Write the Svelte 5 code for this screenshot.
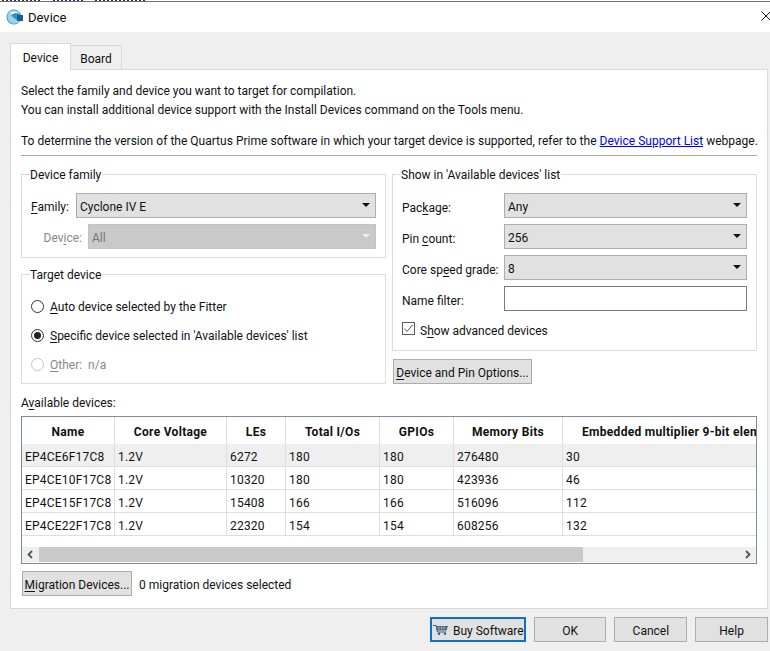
<script>
  const columns = [
    { name: 'Name', width: 93 },
    { name: 'Core Voltage', width: 112 },
    { name: 'LEs', width: 59 },
    { name: 'Total I/Os', width: 94 },
    { name: 'GPIOs', width: 74 },
    { name: 'Memory Bits', width: 109 },
    { name: 'Embedded multiplier 9-bit elements', width: 240 }
  ];
  const rows = [
    ['EP4CE6F17C8', '1.2V', '6272', '180', '180', '276480', '30'],
    ['EP4CE10F17C8', '1.2V', '10320', '180', '180', '423936', '46'],
    ['EP4CE15F17C8', '1.2V', '15408', '166', '166', '516096', '112'],
    ['EP4CE22F17C8', '1.2V', '22320', '154', '154', '608256', '132']
  ];
</script>

<div class="window">
  <div class="behind"><i class="b1"></i><i class="b2"></i><i class="b3"></i></div>
  <header class="titlebar">
    <svg class="logo" width="17" height="16" viewBox="0 0 17 16" aria-hidden="true">
      <circle cx="8" cy="8" r="7.500" fill="#2f8fc4" />
      <path d="M2 4.500C4 1.500 9 .5 12 2L15 5.500C11 3.500 7 4 5 6C7.500 9.500 11 11.500 14.500 11.500C12 15 7 16 3.500 13C1 10.500 1 7.500 2 4.500Z" fill="#9fd0ea" />
      <path d="M4.500 3C7 2.300 10 2.500 12 4C9 3.800 7 4.500 5.500 5.800Z" fill="#f4fafd" />
      <rect x="11" y="6" width="6" height="6" fill="#135f96" />
    </svg>
    <span class="title">Device</span>
    <svg class="close" width="10" height="10" viewBox="0 0 10 10" aria-hidden="true"><path d="M.5.500 9.500 9.500M9.500.500.500 9.500" stroke="#1a1a1a" fill="none" /></svg>
  </header>

  <main class="body">
    <div class="tabs">
      <div class="tab active">Device</div>
      <div class="tab">Board</div>
    </div>
    <section class="pane">
      <div class="intro">
        <p>Select the family and device you want to target for compilation.</p>
        <p>You can install additional device support with the Install Devices command on the Tools menu.</p>
        <p class="spaced">To determine the version of the Quartus Prime software in which your target device is supported, refer to the <a href="#top">Device Support List</a> webpage.</p>
      </div>

      <div class="columns">
        <div class="col">
          <fieldset class="family">
            <legend>Device family</legend>
            <div class="field">
              <span class="lab"><u>F</u>amily:</span>
              <div class="select wide"><span>Cyclone IV E</span><i class="arrow"></i></div>
            </div>
            <div class="field second">
              <span class="lab dim">Dev<u>i</u>ce:</span>
              <div class="select disabled"><span>All</span><i class="arrow"></i></div>
            </div>
          </fieldset>
          <fieldset class="target">
            <legend>Target device</legend>
            <div class="radio"><i class="dot"></i><span><u>A</u>uto device selected by the Fitter</span></div>
            <div class="radio"><i class="dot on"></i><span><u>S</u>pecific device selected in 'Available devices' list</span></div>
            <div class="radio dim"><i class="dot off"></i><span><u>O</u>ther: &nbsp;n/a</span></div>
          </fieldset>
        </div>

        <div class="col">
          <fieldset class="show">
            <legend>Show in 'Available devices' list</legend>
            <div class="grid">
              <span>Pac<u>k</u>age:</span>
              <div class="select"><span>Any</span><i class="arrow"></i></div>
              <span>Pin <u>c</u>ount:</span>
              <div class="select"><span>256</span><i class="arrow"></i></div>
              <span>Core sp<u>e</u>ed grade:</span>
              <div class="select"><span>8</span><i class="arrow"></i></div>
              <span>Name filter:</span>
              <div class="input"></div>
            </div>
            <div class="check">
              <svg width="13" height="13" viewBox="0 0 13 13" aria-hidden="true">
                <rect x=".5" y=".5" width="12" height="12" fill="#fff" stroke="#5a5a5a" />
                <path d="M2.500 6.500 5 9.500 10.500 3" fill="none" stroke="#555" />
              </svg>
              <span>S<u>h</u>ow advanced devices</span>
            </div>
          </fieldset>
          <div class="btn options"><u>D</u>evice and Pin Options...</div>
        </div>
      </div>

      <div class="avail">A<u>v</u>ailable devices:</div>
      <div class="table">
        <div class="viewport">
          <div class="row head">
            {#each columns as c}
              <div class="cell" style="width:{c.width}px">{c.name}</div>
            {/each}
          </div>
          {#each rows as r, i}
            <div class="row" class:first={i === 0}>
              {#each r as v, j}
                <div class="cell" style="width:{columns[j].width}px">{v}</div>
              {/each}
            </div>
          {/each}
        </div>
        <div class="scroll">
          <svg class="sa" width="17" height="15" viewBox="0 0 17 15" aria-hidden="true"><path d="M10 4 6.500 7.500 10 11" fill="none" stroke="#555" stroke-width="1.800" /></svg>
          <div class="thumb"></div>
          <svg class="sa end" width="17" height="15" viewBox="0 0 17 15" aria-hidden="true"><path d="M7 4 10.500 7.500 7 11" fill="none" stroke="#555" stroke-width="1.800" /></svg>
        </div>
      </div>

      <div class="migration">
        <div class="btn mig"><u>M</u>igration Devices...</div>
        <span class="count">0 migration devices selected</span>
      </div>
    </section>

    <footer class="footer">
      <div class="btn buy">
        <svg width="15" height="10" viewBox="0 0 15 10" aria-hidden="true">
          <path d="M0 .5H3L4.500 7H13" fill="none" stroke="#3d5a78" />
          <path d="M3 1H15L13.500 5.500H4Z" fill="#3d5a78" />
          <path d="M6 1V5.500M8.500 1V5.500M11 1V5.500M3.500 3H14.500" stroke="#cfd8e0" stroke-width=".5" />
          <circle cx="6" cy="8.700" r="1.200" fill="#3d5a78" /><circle cx="12" cy="8.700" r="1.200" fill="#3d5a78" />
        </svg>
        <span>Buy Software</span>
      </div>
      <div class="btn ok">OK</div>
      <div class="btn cancel">Cancel</div>
      <div class="btn help">Help</div>
    </footer>
  </main>
</div>

<style>
  :global(body) { margin: 0; }
  .window {
    width: 770px; height: 651px; overflow: hidden; display: flex; flex-direction: column;
    font-family: Roboto, "Open Sans", sans-serif; font-size: 12px; color: #111; background: #efefef;
  }
  u { text-underline-offset: 2px; text-decoration-thickness: 1px; }
  .behind { height: 1px; background: #fff; display: flex; padding-left: 2px; }
  .behind i { display: block; height: 1px; }
  .behind .b1 { width: 40px; background: repeating-linear-gradient(90deg, #333 0 2px, #fff 2px 4px); }
  .behind .b2 { width: 32px; margin-left: 11px; background: repeating-linear-gradient(90deg, #2222cc 0 2px, #fff 2px 4px); }
  .behind .b3 { width: 50px; margin-left: 10px; background: repeating-linear-gradient(90deg, #333 0 2px, #fff 2px 4px); }
  .titlebar { height: 30px; border-top: 1px solid #707070; background: #fff; display: flex; align-items: center; }
  .logo { margin-left: 6px; }
  .title { margin-left: 5px; font-size: 13px; }
  .close { margin-left: auto; margin-right: -1px; margin-bottom: 2px; }
  .body { flex: 1; padding: 11px 2px 0 10px; display: flex; flex-direction: column; min-height: 0; }
  .tabs { display: flex; height: 27px; align-items: flex-start; position: relative; z-index: 1; }
  .tab { box-sizing: border-box; width: 51px; height: 25px; margin-top: 2px; border: 1px solid #d9d9d9; border-left: 0; text-align: center; line-height: 26px; background: #efefef; }
  .tab.active { width: 61px; height: 27px; margin-top: 0; background: #fff; border-left: 1px solid #d9d9d9; border-bottom: 0; line-height: 28px; }
  .pane { box-sizing: border-box; height: 540px; margin-top: -1px; border: 1px solid #d9d9d9; background: #fff; padding: 12px 10px 0 10px; display: flex; flex-direction: column; }
  .intro p { margin: 0; line-height: 19px; height: 19px; white-space: nowrap; }
  .intro .spaced { box-sizing: border-box; margin-top: 12px; height: 24px; border-bottom: 1px solid #a8a8a8; word-spacing: .1px; }
  a { color: #00e; }
  .columns { display: flex; gap: 6px; margin-top: 10px; }
  .col { width: 365px; display: flex; flex-direction: column; }
  fieldset { box-sizing: border-box; margin: 0; border: 1px solid #dcdcdc; padding: 0 9px; min-width: 0; }
  legend { margin-left: -1px; padding: 2px 1px 0 0; line-height: 14px; }
  .family { height: 92px; padding-top: 11px; }
  .target { height: 118px; margin-top: 8px; padding-top: 10px; }
  .field { display: flex; align-items: center; height: 25px; }
  .field.second { margin-top: 6px; }
  .field .lab { box-sizing: border-box; width: 45px; flex: none; padding-top: 2px; }
  .field.second .lab { width: 57px; text-align: right; padding-right: 6px; }
  .dim { color: #888; }
  .dim u { text-decoration-color: #888; }
  .select { box-sizing: border-box; flex: 1; height: 25px; background: #e1e1e1; border: 1px solid #adadad; display: flex; align-items: center; justify-content: space-between; padding: 2px 5px 0 3px; }
  .select.disabled { background: #c9c9c9; border-color: #c4c4c4; color: #777; }
  .arrow { width: 0; height: 0; border-left: 4px solid transparent; border-right: 4px solid transparent; border-top: 4px solid #111; margin-top: -3px; }
  .disabled .arrow { border-top-color: #eee; }
  .radio { display: flex; align-items: center; height: 29px; gap: 6px; }
  .dot { box-sizing: border-box; width: 13px; height: 13px; border-radius: 50%; border: 1px solid #333; background: #fff; display: block; position: relative; }
  .dot.on::after { content: ''; position: absolute; inset: 2px; border-radius: 50%; background: #222; }
  .dot.off { border-color: #c4c4c4; }
  .show { height: 185px; padding-top: 11px; }
  .grid { display: grid; grid-template-columns: 102px 1fr; row-gap: 6px; align-items: center; }
  .grid > span { white-space: nowrap; padding-top: 4px; }
  .input { height: 25px; box-sizing: border-box; border: 1px solid #7a7a7a; background: #fff; }
  .check { display: flex; align-items: center; gap: 5px; margin-top: 11px; height: 13px; }
  .check span { padding-top: 4px; }
  .btn { box-sizing: border-box; height: 25px; background: #e1e1e1; border: 1px solid #adadad; padding-top: 2px; display: flex; align-items: center; justify-content: center; white-space: nowrap; }
  .options { width: 139px; margin: 8px 0 0 1px; }
  .avail { margin-top: 10px; line-height: 19px; height: 17px; }
  .table { box-sizing: border-box; width: 736px; height: 148px; margin-top: 5px; border: 1px solid #7f8a96; display: flex; flex-direction: column; }
  .viewport { flex: 1; overflow: hidden; }
  .row { display: flex; height: 23px; width: 800px; letter-spacing: .2px; }
  .row.head { height: 27px; font-weight: 700; letter-spacing: .3px; }
  .row.first { background: #efefef; }
  .cell { box-sizing: border-box; flex: none; border-right: 1px solid #dedede; border-bottom: 1px solid #dedede; padding: 0 3px; line-height: 27px; white-space: nowrap; overflow: hidden; }
  .head .cell { border-bottom: 0; text-align: center; line-height: 31px; padding: 0 8px; }
  .head .cell:last-child { text-align: left; padding-left: 19px; }
  .scroll { height: 15px; background: #efefef; display: flex; margin-bottom: 1px; }
  .sa { flex: none; }
  .sa.end { margin-left: auto; }
  .thumb { width: 544px; background: #c9c9c9; }
  .migration { display: flex; align-items: center; gap: 7px; margin-top: 7px; margin-left: 1px; }
  .count { padding-top: 2px; }
  .mig { width: 110px; }
  .footer { display: flex; gap: 8px; margin-top: 8px; padding-left: 420px; }
  .buy { width: 96px; border: 2px solid #0b72c4; gap: 5px; justify-content: flex-start; padding-left: 1px; }
  .buy svg { margin-top: -2px; }
  .ok, .cancel, .help { width: 73px; }
</style>
